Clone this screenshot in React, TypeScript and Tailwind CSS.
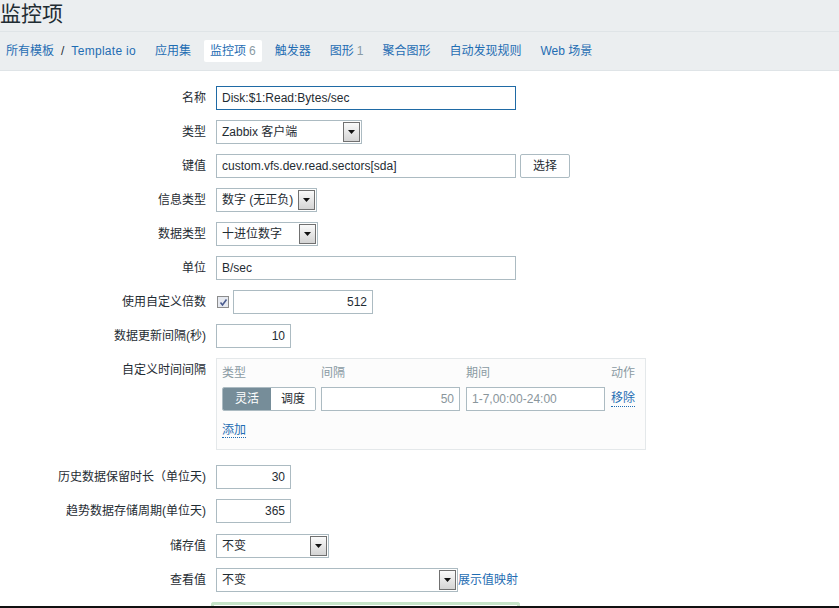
import React from "react"

const font = { fontFamily: '"Liberation Sans", "Noto Sans CJK SC", sans-serif' }

function Arrow() {
  return (
    <div className="mr-[1px] flex h-[20px] w-[17px] items-center justify-center border border-[#707070] bg-gradient-to-b from-[#fafafa] to-[#d4d4d4]">
      <svg width="7" height="4" viewBox="0 0 7 4">
        <path d="M0 0 L7 0 L3.5 4 Z" fill="#111" />
      </svg>
    </div>
  )
}

function Select({ value, w }: { value: string; w: string }) {
  return (
    <div className={`flex h-[24px] items-center border border-[#acbbc2] bg-white ${w}`}>
      <span className="flex-1 pl-[5px] text-[12px] text-[#1f2c33]">{value}</span>
      <Arrow />
    </div>
  )
}

function Input({ value, w, right, focus }: { value: string; w: string; right?: boolean; focus?: boolean }) {
  return (
    <div
      className={`flex h-[24px] items-center border bg-white px-[5px] text-[12px] text-[#1f2c33] ${w} ${
        focus ? "border-[#1f6aa5]" : "border-[#acbbc2]"
      } ${right ? "justify-end" : ""}`}
    >
      {value}
    </div>
  )
}

function Row({ label, children, top }: { label: string; children: React.ReactNode; top?: boolean }) {
  return (
    <div className={`flex gap-[10px] ${top ? "items-start" : "items-center"}`}>
      <div className="w-[206px] text-right text-[12px] leading-[24px] text-[#1f2c33]">{label}</div>
      <div className="flex items-center gap-[4px]">{children}</div>
    </div>
  )
}

export default function App() {
  const tabs = [
    { t: "应用集" },
    { t: "监控项", n: "6", active: true },
    { t: "触发器" },
    { t: "图形", n: "1" },
    { t: "聚合图形" },
    { t: "自动发现规则" },
    { t: "Web 场景" },
  ]

  return (
    <div style={font} className="relative h-[608px] w-[839px] overflow-hidden bg-white">
      <header className="bg-[#ebeef0]">
        <div className="h-[32px] border-b border-[#dfe4e7] text-[21px] leading-[28px] text-[#1f2c33]">监控项</div>
        <nav className="flex h-[39px] items-center gap-[7px] border-b border-[#dfe4e7] text-[12px]">
          <div className="px-[6px] text-[#1f6db3]">
            所有模板<span className="mx-[7px] text-[#1f2c33]">/</span>
            <span className="tracking-[0.3px]">Template io</span>
          </div>
          {tabs.map((tab) => (
            <div
              key={tab.t}
              className={`flex h-[22px] items-center px-[6px] text-[#1f6db3] ${tab.active ? "rounded-[2px] bg-white" : ""}`}
            >
              {tab.t}
              {tab.n && <span className="ml-[3px] text-[#8a9aa3]">{tab.n}</span>}
            </div>
          ))}
        </nav>
      </header>

      <main className="flex flex-col gap-[10px] pt-[15px]">
        <Row label="名称">
          <Input value="Disk:$1:Read:Bytes/sec" w="w-[300px]" focus />
        </Row>
        <Row label="类型">
          <Select value="Zabbix 客户端" w="w-[146px]" />
        </Row>
        <Row label="键值">
          <Input value="custom.vfs.dev.read.sectors[sda]" w="w-[300px]" />
          <div className="flex h-[24px] w-[50px] items-center justify-center rounded-[2px] border border-[#acbbc2] bg-white text-[12px] text-[#1f2c33]">
            选择
          </div>
        </Row>
        <Row label="信息类型">
          <Select value="数字 (无正负)" w="w-[101px]" />
        </Row>
        <Row label="数据类型">
          <Select value="十进位数字" w="w-[102px]" />
        </Row>
        <Row label="单位">
          <Input value="B/sec" w="w-[300px]" />
        </Row>
        <Row label="使用自定义倍数">
          <div className="ml-[1px] flex h-[12px] w-[12px] items-center justify-center border border-[#8c8c8c] bg-[#e6e9f0]">
            <svg width="9" height="9" viewBox="0 0 9 9">
              <path d="M1.5 4.5 L3.5 7 L7.5 1.5" stroke="#4a5b8e" strokeWidth="1.6" fill="none" />
            </svg>
          </div>
          <Input value="512" w="w-[140px]" right />
        </Row>
        <Row label="数据更新间隔(秒)">
          <Input value="10" w="w-[75px]" right />
        </Row>
        <Row label="自定义时间间隔" top>
          <div className="w-[430px] border border-[#e4e8ea] bg-[#fcfcfc] px-[5px] pt-[6px] pb-[10px] text-[12px]">
            <div className="flex leading-[16px] text-[#8a9aa3]">
              <div className="w-[99px]">类型</div>
              <div className="w-[145px]">间隔</div>
              <div className="w-[145px]">期间</div>
              <div>动作</div>
            </div>
            <div className="mt-[6px] flex items-center">
              <div className="mr-[5px] flex h-[24px] w-[94px] overflow-hidden rounded-[2px] border border-[#acbbc2]">
                <div className="flex w-[48px] items-center justify-center bg-[#768d99] text-white">灵活</div>
                <div className="flex flex-1 items-center justify-center bg-white text-[#1f2c33]">调度</div>
              </div>
              <div className="mr-[6px] flex h-[24px] w-[139px] items-center justify-end border border-[#acbbc2] bg-white px-[5px] text-[#8a969c]">
                50
              </div>
              <div className="mr-[6px] flex h-[24px] w-[139px] items-center border border-[#acbbc2] bg-white px-[5px] text-[#8a969c]">
                1-7,00:00-24:00
              </div>
              <span className="border-b border-dotted border-[#1f6db3] leading-[15px] text-[#1f6db3]">移除</span>
            </div>
            <div className="mt-[10px]">
              <span className="border-b border-dotted border-[#1f6db3] leading-[15px] text-[#1f6db3]">添加</span>
            </div>
          </div>
        </Row>
        <div className="mt-[5px]">
          <Row label="历史数据保留时长（单位天)">
            <Input value="30" w="w-[75px]" right />
          </Row>
        </div>
        <Row label="趋势数据存储周期(单位天)">
          <Input value="365" w="w-[75px]" right />
        </Row>
        <div className="mt-[1px]">
          <Row label="储存值">
            <Select value="不变" w="w-[113px]" />
          </Row>
        </div>
        <Row label="查看值">
          <Select value="不变" w="w-[242px]" />
          <span className="-ml-[4px] text-[12px] text-[#1f6db3]">展示值映射</span>
        </Row>
        <div className="ml-[211px] h-[20px] w-[309px] rounded-t-[3px] border-[3px] border-b-0 border-[#c6e4c8] px-[1px] pt-[1px]">
          <div className="h-full border border-[#acbbc2] bg-white" />
        </div>
      </main>

      <div className="absolute bottom-0 left-0 h-[2px] w-full bg-[#111]" />
    </div>
  )
}
